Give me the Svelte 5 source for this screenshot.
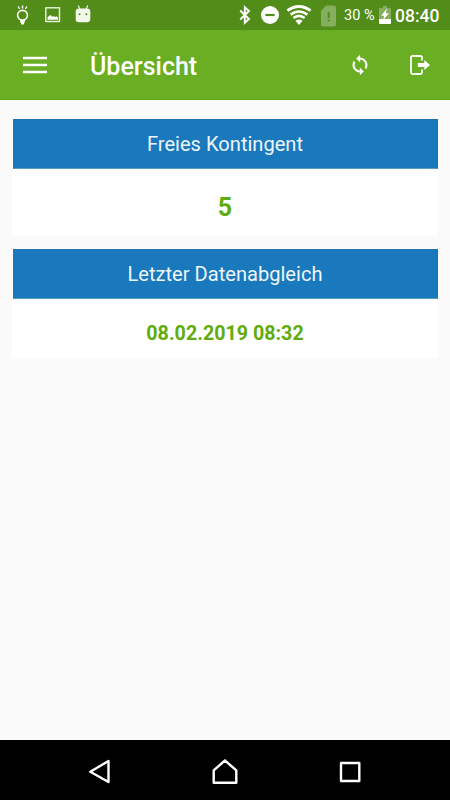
<script>
  const cards = [
    { title: 'Freies Kontingent', value: '5', large: true },
    { title: 'Letzter Datenabgleich', value: '08.02.2019 08:32', large: false }
  ];
</script>

<div class="screen">
  <div class="status">
    <svg class="bulb" width="14" height="22" viewBox="16 4 14 22" fill="none" stroke="#fff">
      <circle cx="22.5" cy="15.3" r="4.9" stroke-width="1.6" />
      <path d="M20.2 19.5h4.6v2.7h-4.6z" fill="#fff" stroke="none" />
      <path d="M20.5 22h4l-.8 2.5h-2.4z" fill="#fff" stroke="none" />
      <path d="M22.5 5.5v3M18.2 6.5l1.4 2.5M26.8 6.5l-1.400 2.5" stroke-width="1.4" />
    </svg>
    <svg class="photo" width="16" height="16" viewBox="0 0 16 16">
      <rect x=".8" y=".8" width="13.7" height="13.7" fill="none" stroke="#e9f2df" stroke-width="1.4" />
      <path d="M2.5 12.8V10.500l1.500-1.500 1.500-1 2 1.800 1.500-.6 1.200.8 1.300-.8 1.600 1.500v2.100z" fill="#fff" />
    </svg>
    <svg class="android" width="16" height="18" viewBox="0 0 16 18">
      <path d="M3.3 .5l1.500 3.5M12.700 .5l-1.500 3.500" stroke="#edf5e5" stroke-width="1.2" />
      <path d="M.7 6.500Q.7 3.500 3.700 3.500h8.600q3 0 3 3v7.500q0 3.300-3.300 3.300H4Q.7 17.300.7 14z" fill="#f3f8ed" />
      <circle cx="4.600" cy="9.200" r="1" fill="#528c19" />
      <circle cx="11.400" cy="9.200" r="1" fill="#528c19" />
    </svg>
    <div class="spacer"></div>
    <svg class="bt" width="12" height="20" viewBox="0 0 12 20" fill="none" stroke="#fff" stroke-width="1.9">
      <path d="M1.200 5.500l8.800 8.500-4.200 3.800V2.200L10 6l-8.800 8.500" />
    </svg>
    <svg class="dnd" width="18" height="18" viewBox="0 0 18 18">
      <circle cx="9" cy="9" r="9" fill="#fff" />
      <path d="M4.400 9h9.200" stroke="#528c19" stroke-width="2.200" />
    </svg>
    <svg class="wifi" width="26" height="20" viewBox="0 0 26 20" fill="none" stroke="#fff">
      <path d="M1.400 5.700Q13-2.700 24.600 5.700" stroke-width="2.800" />
      <path d="M4.600 9.600Q13 3.400 21.400 9.600" stroke-width="2.600" />
      <path d="M7.400 13.100Q13 8.700 18.600 13.100" stroke-width="2.500" />
      <path d="M9.400 15.800Q13 13.200 16.600 15.800L13 20z" fill="#fff" stroke="none" />
    </svg>
    <svg class="sim" width="15" height="22" viewBox="0 0 15 22">
      <path d="M5 .5h8Q15 .5 15 2.500v17q0 2-2 2H2q-2 0-2-2V6z" fill="#86ae5e" />
      <path d="M7.700 7v6M7.700 14.500v2" stroke="#528c19" stroke-width="2" />
    </svg>
    <span class="percent">30 %</span>
    <svg class="battery" width="12" height="18" viewBox="0 0 12 18">
      <path d="M4 0h4v2h3q1 0 1 1v14q0 1-1 1H1q-1 0-1-1V3q0-1 1-1h3z" fill="#86ae5e" />
      <path d="M0 13h12v4q0 1-1 1H1q-1 0-1-1z" fill="#fff" />
      <path d="M7.800 2.500L2.300 9.700h2.800L4.200 14l5.800-6.800H6.900z" fill="#fff" />
    </svg>
    <span class="clock">08:40</span>
  </div>

  <header>
    <svg class="menu" width="24" height="18" viewBox="0 0 24 18">
      <path d="M0 2h24M0 9h24M0 16h24" stroke="#fff" stroke-width="2.7" />
    </svg>
    <h1>Übersicht</h1>
    <svg class="sync" width="22" height="22" viewBox="0 0 24 24" fill="#fff" stroke="#fff" stroke-width=".3">
      <path d="M12 4V1L8 5l4 4V6c3.310 0 6 2.690 6 6 0 1.010-.25 1.970-.7 2.800l1.460 1.460C19.540 15.030 20 13.570 20 12c0-4.420-3.580-8-8-8zm0 14c-3.310 0-6-2.690-6-6 0-1.010.25-1.970.7-2.800L5.240 7.740C4.460 8.970 4 10.430 4 12c0 4.420 3.580 8 8 8v3l4-4-4-4v3z" />
    </svg>
    <svg class="exit" width="20" height="20" viewBox="0 0 20 20">
      <path d="M12 5.500V2.500q0-1.500-1.500-1.500H2.500Q1 1 1 2.500v15Q1 19 2.500 19h8q1.500 0 1.500-1.500v-3" fill="none" stroke="#f5faee" stroke-width="1.900" />
      <path d="M7.800 8h6.500V5L20 10l-5.700 5v-3H7.800z" fill="#fff" />
    </svg>
  </header>

  <main>
    {#each cards as card}
      <section>
        <h2>{card.title}</h2>
        <div class="value" class:large={card.large}>{card.value}</div>
      </section>
    {/each}
  </main>

  <nav>
    <svg width="24" height="26" viewBox="0 0 24 26"><path d="M20.500 2v21L2.300 12.800z" /></svg>
    <svg class="home" width="26" height="26" viewBox="0 0 26 26"><path d="M13 1.500l11.300 9.900V23.700H1.700V11.400z" /></svg>
    <svg width="22" height="26" viewBox="0 0 22 26"><path d="M2 4h18.300v18H2z" /></svg>
  </nav>
</div>

<style>
  :global(body) { margin: 0; }
  .screen {
    width: 450px;
    height: 800px;
    display: flex;
    flex-direction: column;
    background: #fafafa;
    font-family: Roboto, "Liberation Sans", sans-serif;
    overflow: hidden;
  }
  svg { flex: none; display: block; }
  .status {
    height: 30px;
    flex: none;
    box-sizing: border-box;
    padding: 0 10px 0 16px;
    display: flex;
    align-items: center;
    background: #528c19;
    color: #fff;
    white-space: nowrap;
  }
  .photo { margin-left: 15px; }
  .android { margin: 0 0 3px 14px; }
  .spacer { flex: 1; }
  .dnd { margin-left: 10px; }
  .wifi { margin-left: 7px; }
  .sim { margin: 1px 0 0 9px; }
  .percent { width: 35px; margin-left: 8px; font-size: 14.5px; line-height: 30px; padding-top: 2px; }
  .battery { width: 12px; }
  .clock { width: 44px; margin-left: 4px; margin-right: 1px; font-size: 17.5px; font-weight: 500; line-height: 30px; padding-top: 2px; }
  header {
    height: 70px;
    flex: none;
    box-sizing: border-box;
    display: flex;
    align-items: center;
    padding: 0 20px 0 23px;
    background: #6aae23;
    border-bottom: 1px solid #5da515;
    color: #fff;
  }
  h1 { flex: 1; margin: 5px 0 0 43px; font-size: 25px; font-weight: 500; line-height: 30px; }
  .exit { margin-left: 39px; }
  main {
    flex: 1;
    display: flex;
    flex-direction: column;
    gap: 14px;
    padding: 19px 12px 0;
  }
  section { background: #fff; }
  h2 {
    margin: 0 .5px;
    height: 50px;
    box-sizing: border-box;
    border: 1px solid #2272b0;
    border-bottom-color: #5b9bc9;
    background: #1979bc;
    color: #edf6fc;
    font-size: 20.1px;
    font-weight: 400;
    line-height: 49px;
    text-align: center;
  }
  .value {
    height: 59px;
    box-sizing: border-box;
    padding-top: 5px;
    line-height: 60px;
    text-align: center;
    color: #60ac0c;
    font-size: 19.7px;
    font-weight: 700;
  }
  .value.large { height: 66px; padding-top: 9px; font-size: 25px; }
  nav {
    height: 60px;
    flex: none;
    box-sizing: border-box;
    padding: 3px 89px 0 88px;
    display: flex;
    align-items: center;
    justify-content: space-between;
    background: #000;
  }
  .home { margin-right: 2px; }
  nav path { fill: none; stroke: #fff; stroke-width: 2.4; stroke-linejoin: round; }
</style>
